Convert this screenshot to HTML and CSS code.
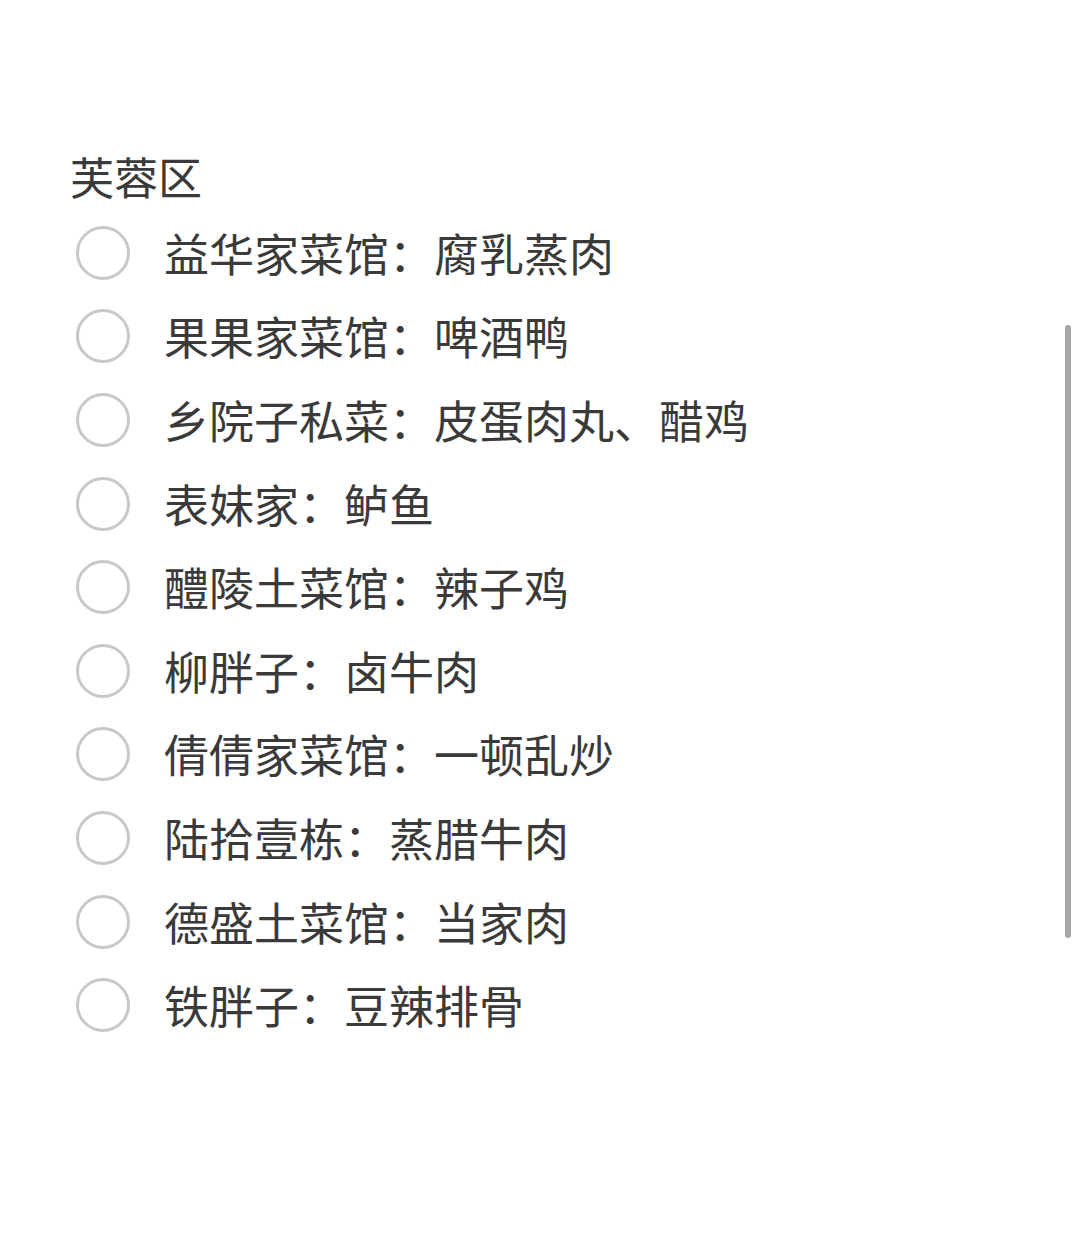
FILE: index.html
```html
<!DOCTYPE html>
<html lang="zh-CN">
<head>
    <meta charset="UTF-8">
    <meta name="viewport" content="width=device-width, initial-scale=1.0">
    <title>芙蓉区</title>
    <link rel="stylesheet" href="styles.css">
</head>
<body>
    <div class="container">
        <h2 class="area">芙蓉区</h2>
        <ul class="options">
            <li class="option"><span class="radio"></span><span class="label">益华家菜馆：腐乳蒸肉</span></li>
            <li class="option"><span class="radio"></span><span class="label">果果家菜馆：啤酒鸭</span></li>
            <li class="option"><span class="radio"></span><span class="label">乡院子私菜：皮蛋肉丸、醋鸡</span></li>
            <li class="option"><span class="radio"></span><span class="label">表妹家：鲈鱼</span></li>
            <li class="option"><span class="radio"></span><span class="label">醴陵土菜馆：辣子鸡</span></li>
            <li class="option"><span class="radio"></span><span class="label">柳胖子：卤牛肉</span></li>
            <li class="option"><span class="radio"></span><span class="label">倩倩家菜馆：一顿乱炒</span></li>
            <li class="option"><span class="radio"></span><span class="label">陆拾壹栋：蒸腊牛肉</span></li>
            <li class="option"><span class="radio"></span><span class="label">德盛土菜馆：当家肉</span></li>
            <li class="option"><span class="radio"></span><span class="label">铁胖子：豆辣排骨</span></li>
        </ul>
    </div>
    <div class="scrollbar"></div>
</body>
</html>
```

FILE: styles.css
```css
body {
    margin: 0;
    background: #fff;
    font-family: "Noto Sans CJK SC", "Noto Sans", sans-serif;
    color: #3a3a3a;
}
.container {
    padding: 144px 0 0 70px;
}
.area {
    margin: 0;
    font-size: 44px;
    font-weight: normal;
    line-height: 64px;
}
.options {
    list-style: none;
    margin: 3px 0 0 0;
    padding: 0 0 0 6px;
}
.option {
    display: flex;
    align-items: center;
    height: 83.6px;
}
.radio {
    width: 48px;
    height: 48px;
    border: 3px solid #c8c8c8;
    border-radius: 50%;
    flex-shrink: 0;
}
.label {
    margin-left: 34px;
    font-size: 45px;
    line-height: 60px;
}
.scrollbar {
    position: fixed;
    top: 325px;
    left: 1065px;
    width: 6px;
    height: 613px;
    border-radius: 3px;
    background: #a6a6a6;
}
```
